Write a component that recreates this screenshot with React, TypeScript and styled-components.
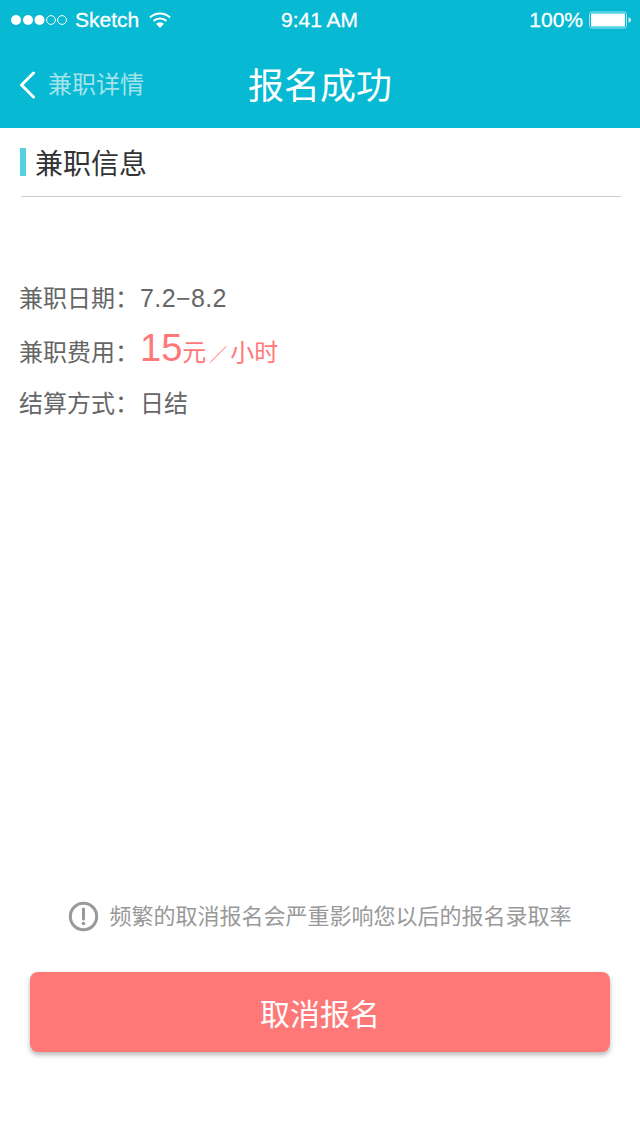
import styled, { createGlobalStyle } from 'styled-components';

const GlobalStyle = createGlobalStyle`
  html, body {
    margin: 0;
    padding: 0;
    background: #ffffff;
  }
  * {
    box-sizing: border-box;
  }
  body {
    font-family: "Liberation Sans", "Noto Sans CJK SC", sans-serif;
  }
`;

const Page = styled.div`
  width: 640px;
  height: 1136px;
  display: flex;
  flex-direction: column;
  background: #ffffff;
  overflow: hidden;
`;

const Header = styled.header`
  background: #07b9d2;
  color: #ffffff;
  height: 128px;
  flex: none;
`;

const StatusBar = styled.div`
  height: 40px;
  padding: 0 12px 0 11px;
  display: grid;
  grid-template-columns: 1fr auto 1fr;
  align-items: center;
  font-size: 21px;
  -webkit-text-stroke: 0.3px #ffffff;
`;

const StatusLeft = styled.div`
  display: flex;
  align-items: center;
`;

const StatusRight = styled.div`
  display: flex;
  align-items: center;
  justify-content: flex-end;
  gap: 6px;
  margin-right: -4px;
`;

const Carrier = styled.span`
  margin-left: 7px;
  margin-right: 10px;
`;

const Signal = styled.svg`
  display: block;
`;

const BackArrow = styled.svg`
  display: block;
  margin-top: 6px;
  margin-left: -1px;
`;

const NavBar = styled.nav`
  height: 88px;
  padding: 0 20px 4px;
  display: grid;
  grid-template-columns: 1fr auto 1fr;
  align-items: center;
`;

const BackLink = styled.a`
  display: flex;
  align-items: center;
  gap: 13px;
  font-size: 24px;
  color: #a5e3ec;
`;

const NavTitle = styled.h1`
  margin: 10px 0 0;
  font-size: 36px;
  font-weight: 400;
  color: #ffffff;
  line-height: 44px;
`;

const Main = styled.main`
  flex: 1;
  padding: 0 20px;
`;

const SectionHead = styled.div`
  height: 69px;
  padding-top: 20px;
  border-bottom: 1px solid #cccccc;
  margin-left: 1px;
  margin-right: -1px;
`;

const SectionTitle = styled.h2`
  margin: 0 0 0 -1px;
  height: 28px;
  padding-left: 9px;
  border-left: 6px solid #55cfe2;
  font-size: 28px;
  line-height: 34px;
  font-weight: 400;
  color: #333333;
`;

const InfoList = styled.dl`
  margin: 83px 0 0 -1px;
`;

const InfoRow = styled.div<{ $height: number }>`
  display: flex;
  align-items: baseline;
  height: ${(p) => p.$height}px;
  font-size: 24px;
  line-height: 36px;
  color: #666666;
`;

const InfoLabel = styled.dt`
  width: 121px;
  flex: none;
`;

const InfoValue = styled.dd`
  margin: 0;
`;

const DateRange = styled.span`
  font-size: 25px;
  letter-spacing: 0.4px;
`;

const Price = styled.span`
  color: #ff7878;
  white-space: pre;
`;

const PriceNumber = styled.span`
  font-size: 38px;
`;

const PriceSlash = styled.span`
  font-size: 18px;
  margin: 0 3px;
`;

const Footer = styled.footer`
  flex: none;
  height: 235px;
  padding: 0 30px;
`;

const Notice = styled.p`
  margin: 0;
  height: 71px;
  display: flex;
  align-items: flex-start;
  justify-content: center;
  gap: 10px;
  font-size: 22px;
  line-height: 32px;
  color: #999999;
`;

const NoticeIcon = styled.svg`
  flex: none;
  display: block;
`;

const CancelButton = styled.button`
  display: block;
  width: 100%;
  height: 80px;
  border: 0;
  border-radius: 8px;
  background: #ff7878;
  color: #ffffff;
  font-family: inherit;
  font-size: 30px;
  box-shadow: 0 3px 5px rgba(0, 0, 0, 0.28);
`;

function SignalDots() {
  return (
    <Signal width="57" height="12" viewBox="0 0 57 12">
      <circle cx="5" cy="6" r="5" fill="#fff" />
      <circle cx="17" cy="6" r="5" fill="#fff" />
      <circle cx="28.5" cy="6" r="5" fill="#fff" />
      <circle cx="40" cy="6" r="4.4" fill="none" stroke="#fff" strokeWidth="1" />
      <circle cx="51" cy="6" r="4.4" fill="none" stroke="#fff" strokeWidth="1" />
    </Signal>
  );
}

function Wifi() {
  return (
    <Signal width="22" height="16" viewBox="0 0 22 16">
      <path d="M1 5.5a14.5 14.5 0 0 1 20 0" fill="none" stroke="#fff" strokeWidth="2" />
      <path d="M4.5 9a9.5 9.5 0 0 1 13 0" fill="none" stroke="#fff" strokeWidth="2" />
      <path d="M11 16l-4-4.2a5.8 5.8 0 0 1 8 0z" fill="#fff" />
    </Signal>
  );
}

function Battery() {
  return (
    <Signal width="43" height="18" viewBox="0 0 43 18">
      <rect x="0.5" y="1" width="37" height="16" rx="2.5" fill="none" stroke="#a5e3ec" strokeWidth="1" />
      <rect x="2" y="2.5" width="34" height="13" rx="1" fill="#fff" />
      <path d="M39.5 6.5c1.6 0 2.5 1 2.5 2.5s-.9 2.5-2.5 2.5z" fill="#d5f2f6" />
    </Signal>
  );
}

function App() {
  return (
    <Page>
      <GlobalStyle />
      <Header>
        <StatusBar>
          <StatusLeft>
            <SignalDots />
            <Carrier>Sketch</Carrier>
            <Wifi />
          </StatusLeft>
          <span>9:41 AM</span>
          <StatusRight>
            <span>100%</span>
            <Battery />
          </StatusRight>
        </StatusBar>
        <NavBar>
          <BackLink>
            <BackArrow width="16" height="28" viewBox="0 0 16 28">
              <path d="M14.5 2L2.5 14l12 12" fill="none" stroke="#fff" strokeWidth="3" strokeLinecap="round" strokeLinejoin="round" />
            </BackArrow>
            兼职详情
          </BackLink>
          <NavTitle>报名成功</NavTitle>
          <span />
        </NavBar>
      </Header>
      <Main>
        <SectionHead>
          <SectionTitle>兼职信息</SectionTitle>
        </SectionHead>
        <InfoList>
          <InfoRow $height={50}>
            <InfoLabel>兼职日期：</InfoLabel>
            <InfoValue>
              <DateRange>7.2−8.2</DateRange>
            </InfoValue>
          </InfoRow>
          <InfoRow $height={56}>
            <InfoLabel>兼职费用：</InfoLabel>
            <InfoValue>
              <Price>
                <PriceNumber>15</PriceNumber>元<PriceSlash>／</PriceSlash>小时
              </Price>
            </InfoValue>
          </InfoRow>
          <InfoRow $height={36}>
            <InfoLabel>结算方式：</InfoLabel>
            <InfoValue>日结</InfoValue>
          </InfoRow>
        </InfoList>
      </Main>
      <Footer>
        <Notice>
          <NoticeIcon width="31" height="31" viewBox="0 0 31 31">
            <circle cx="15.5" cy="15.5" r="13.2" fill="none" stroke="#999999" strokeWidth="3" />
            <path d="M15.5 8v10" stroke="#999999" strokeWidth="3" strokeLinecap="round" />
            <circle cx="15.5" cy="22.5" r="1.8" fill="#999999" />
          </NoticeIcon>
          频繁的取消报名会严重影响您以后的报名录取率
        </Notice>
        <CancelButton>取消报名</CancelButton>
      </Footer>
    </Page>
  );
}

export default App;
